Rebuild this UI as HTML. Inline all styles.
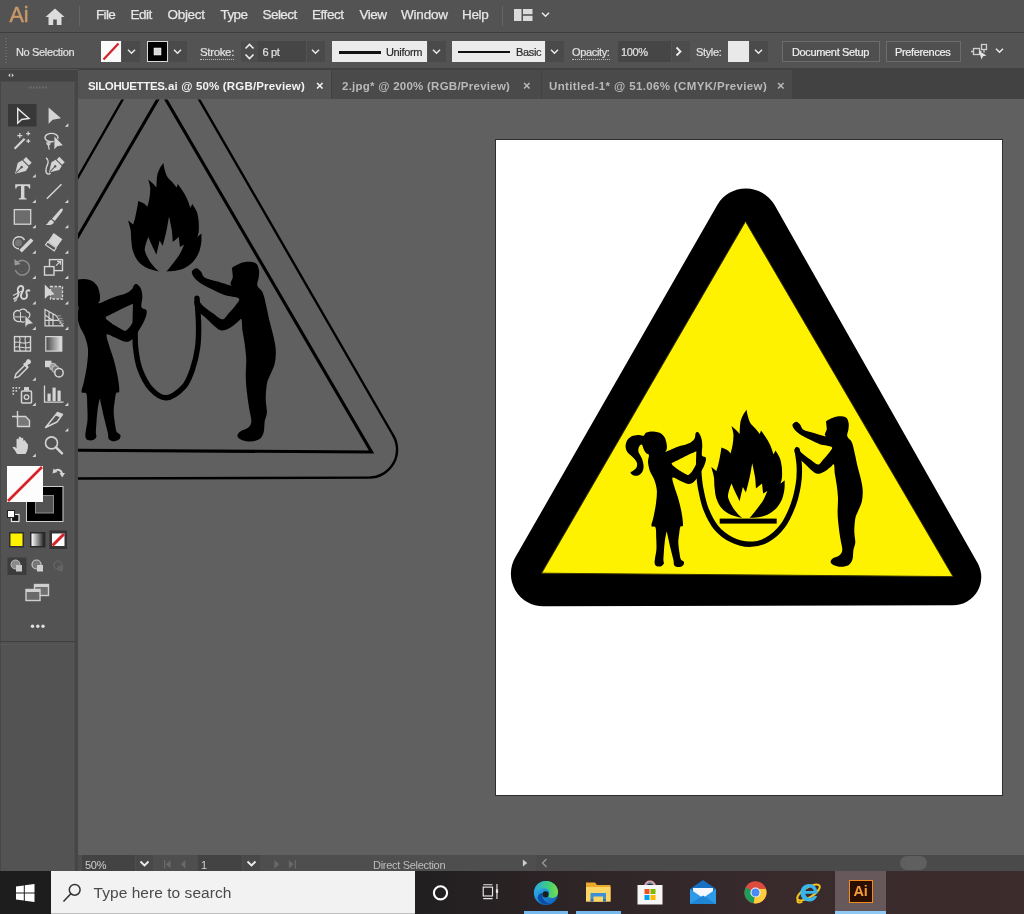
<!DOCTYPE html>
<html><head><meta charset="utf-8"><title>Illustrator</title>
<style>
*{box-sizing:border-box;margin:0;padding:0}
html,body{width:1024px;height:914px;overflow:hidden;background:#606060;font-family:"Liberation Sans",sans-serif;color:#e6e6e6;font-size:13px}
body{position:relative}
.a{position:absolute}
.t{position:absolute;white-space:nowrap;line-height:1}
#menubar{position:absolute;left:0;top:0;width:1024px;height:32px;background:#535353}
#menubar .t{top:8.1px;font-size:13.5px;color:#e6e6e6;letter-spacing:-0.2px;-webkit-text-stroke:0.25px #e6e6e6}
#ctrl{position:absolute;left:0;top:32px;width:1024px;height:38px;background:#535353;border-top:1px solid #3e3e3e;border-bottom:2px solid #414141}
#ctrl .t{font-size:11px;color:#e2e2e2;letter-spacing:-0.35px;top:14px;-webkit-text-stroke:0.2px currentColor}
.dd{position:absolute;top:8px;height:21px;width:18px;background:#4a4a4a}
.inp{position:absolute;top:8px;height:21px;background:#464646}
#tabs{position:absolute;left:0;top:70px;width:1024px;height:29.4px;background:#424242}
.tab{position:absolute;top:0;height:29.4px;background:#4a4a4a;color:#b9b9b9}
.tab .t{font-size:11.5px;font-weight:bold;top:10.6px;letter-spacing:-0.1px}
#tools{position:absolute;left:0;top:69px;width:78px;height:802px;background:#535353}
#status{position:absolute;left:78px;top:855px;width:946px;height:16px;background:#4e4e4e}
#status .t{font-size:11px;color:#d0d0d0;letter-spacing:-0.3px;top:5px}
#taskbar{position:absolute;left:0;top:871px;width:1024px;height:43px;background:linear-gradient(90deg,#1d1d1d 0,#1f1e1e 400px,#2d2426 560px,#382a2c 760px,#3d2c2c 1024px)}
#menubar,#ctrl,#tabs,#status,#taskbar{will-change:transform}
</style></head>
<body>

<svg id="art" width="1024" height="914" viewBox="0 0 1024 914" style="position:absolute;left:0;top:0">
<defs>
<clipPath id="cv"><rect x="78" y="99.4" width="946" height="756"/></clipPath>
<path id="girl" d="M653.3 431.4C655.6 431.5 658.4 432.1 660.3 433.1C662.2 434.2 663.6 435.9 664.7 437.5C665.7 439.1 666.0 441.2 666.4 442.8C666.8 444.3 666.9 445.5 666.9 446.6C667.0 447.8 666.7 448.9 666.6 449.8C666.4 450.6 664.2 452.2 666.1 451.7C667.9 451.2 674.1 448.1 677.8 446.8C681.5 445.5 685.5 445.0 688.3 443.6C691.1 442.3 693.2 440.7 694.4 438.9C695.7 437.2 695.0 434.2 695.7 433.1C696.3 432.1 697.5 431.7 698.5 432.6C699.4 433.5 700.8 436.1 701.4 438.4C702.1 440.7 702.3 443.8 702.3 446.3C702.3 448.8 701.4 451.7 701.4 453.3C701.4 454.9 701.6 455.2 702.3 455.9C703.0 456.6 705.4 456.3 705.8 457.7C706.3 459.0 705.8 461.3 704.9 463.8C704.1 466.3 702.3 469.6 700.6 472.5C698.8 475.5 696.5 479.4 694.4 481.3C692.4 483.2 690.8 484.1 688.3 483.9C685.8 483.8 682.2 481.4 679.5 480.4C676.9 479.4 673.4 476.8 672.5 477.8C671.7 478.8 673.4 483.3 674.3 486.5C675.2 489.8 676.6 493.0 677.8 497.1C679.0 501.1 680.4 506.4 681.3 511.1C682.2 515.7 683.2 522.5 683.0 525.1C682.9 527.7 681.1 525.4 680.4 526.8C679.8 528.3 679.5 531.2 679.2 533.8C678.8 536.5 678.3 539.4 678.3 542.6C678.4 545.8 679.1 550.3 679.5 553.1C680.0 555.9 680.0 557.8 680.8 559.2C681.5 560.7 683.5 560.8 683.9 561.9C684.3 562.9 683.9 564.5 683.0 565.4C682.2 566.2 680.1 567.1 678.7 567.1C677.2 567.1 675.2 566.5 674.3 565.4C673.4 564.2 674.0 562.7 673.4 560.1C672.8 557.5 671.8 553.7 670.8 549.6C669.8 545.5 668.3 538.5 667.6 535.6C666.9 532.7 667.1 530.9 666.6 532.1C666.1 533.3 665.1 539.1 664.7 542.6C664.2 546.1 664.0 550.2 663.8 553.1C663.6 556.0 663.4 558.4 663.4 560.1C663.4 561.9 664.2 562.6 663.8 563.6C663.4 564.6 662.3 565.8 661.2 566.2C660.0 566.7 657.9 566.7 656.8 566.2C655.7 565.8 655.0 564.9 654.7 563.6C654.4 562.3 654.7 560.7 655.0 558.4C655.3 556.0 656.2 552.8 656.4 549.6C656.6 546.4 656.4 542.7 656.3 539.1C656.1 535.4 656.3 529.9 655.6 527.7C654.8 525.5 651.9 527.6 651.5 526.0C651.1 524.3 652.5 521.7 653.3 518.1C654.0 514.4 655.3 508.7 655.9 504.1C656.5 499.4 657.1 494.1 656.8 490.1C656.5 486.0 655.3 482.8 654.2 479.5C653.0 476.3 650.8 473.7 649.8 470.8C648.8 467.9 648.2 464.7 648.0 462.0C647.9 459.4 649.2 456.5 648.9 455.0C648.6 453.6 647.1 454.3 646.3 453.3C645.4 452.3 644.4 450.4 643.6 448.9C642.9 447.4 642.6 445.0 641.9 444.5C641.2 444.1 639.8 445.1 639.3 446.3C638.7 447.4 638.0 449.5 638.4 451.5C638.8 453.6 641.0 456.0 641.9 458.5C642.8 461.0 643.6 464.1 643.6 466.4C643.6 468.7 642.9 471.0 641.9 472.5C640.9 474.1 639.0 475.3 637.5 475.7C636.1 476.1 634.3 475.7 633.1 475.2C632.0 474.6 630.5 473.3 630.5 472.5C630.5 471.8 632.1 471.7 633.1 470.8C634.2 469.9 636.1 468.7 636.6 467.3C637.2 465.8 637.4 463.8 636.6 462.0C635.9 460.3 633.9 458.5 632.3 456.8C630.7 455.0 628.1 453.4 627.0 451.5C625.9 449.6 625.5 447.4 625.6 445.4C625.8 443.4 626.6 440.9 627.9 439.3C629.1 437.7 631.2 436.5 633.1 435.8C635.0 435.0 637.5 434.9 639.3 434.9C641.0 434.9 642.5 436.1 643.6 435.8C644.8 435.4 644.7 433.3 646.3 432.6C647.9 431.9 650.9 431.3 653.3 431.4Z"/>
<path id="girlL" d="M653.3 431.4C655.6 431.5 658.4 432.1 660.3 433.1C662.2 434.2 663.6 435.9 664.7 437.5C665.7 439.1 666.0 441.2 666.4 442.8C666.8 444.3 666.9 445.5 666.9 446.6C667.0 447.8 666.7 448.9 666.6 449.8C666.4 450.6 664.2 452.2 666.1 451.7C667.9 451.2 674.1 448.1 677.8 446.8C681.5 445.5 685.7 444.8 688.3 443.6C690.9 442.5 692.4 441.1 693.6 440.0C694.7 438.8 694.6 437.3 695.3 436.6C696.0 435.9 697.0 435.3 697.9 435.8C698.9 436.3 700.4 437.9 701.1 439.6C701.8 441.4 702.3 444.0 702.3 446.3C702.4 448.5 701.4 451.7 701.4 453.3C701.4 454.9 701.6 455.2 702.3 455.9C703.0 456.6 705.4 456.3 705.8 457.7C706.3 459.0 705.8 461.3 704.9 463.8C704.1 466.3 702.3 469.6 700.6 472.5C698.8 475.5 696.5 479.4 694.4 481.3C692.4 483.2 690.8 484.1 688.3 483.9C685.8 483.8 682.2 481.4 679.5 480.4C676.9 479.4 673.4 476.8 672.5 477.8C671.7 478.8 673.4 483.3 674.3 486.5C675.2 489.8 676.6 493.0 677.8 497.1C679.0 501.1 680.4 506.4 681.3 511.1C682.2 515.7 683.2 522.5 683.0 525.1C682.9 527.7 681.1 525.4 680.4 526.8C679.8 528.3 679.5 531.2 679.2 533.8C678.8 536.5 678.3 539.4 678.3 542.6C678.4 545.8 679.1 550.3 679.5 553.1C680.0 555.9 680.0 557.8 680.8 559.2C681.5 560.7 683.5 560.8 683.9 561.9C684.3 562.9 683.9 564.5 683.0 565.4C682.2 566.2 680.1 567.1 678.7 567.1C677.2 567.1 675.2 566.5 674.3 565.4C673.4 564.2 674.0 562.7 673.4 560.1C672.8 557.5 671.8 553.7 670.8 549.6C669.8 545.5 668.3 538.5 667.6 535.6C666.9 532.7 667.1 530.9 666.6 532.1C666.1 533.3 665.1 539.1 664.7 542.6C664.2 546.1 664.0 550.2 663.8 553.1C663.6 556.0 663.4 558.4 663.4 560.1C663.4 561.9 664.2 562.6 663.8 563.6C663.4 564.6 662.3 565.8 661.2 566.2C660.0 566.7 657.9 566.7 656.8 566.2C655.7 565.8 655.0 564.9 654.7 563.6C654.4 562.3 654.7 560.7 655.0 558.4C655.3 556.0 656.2 552.8 656.4 549.6C656.6 546.4 656.4 542.7 656.3 539.1C656.1 535.4 656.3 529.9 655.6 527.7C654.8 525.5 651.9 527.6 651.5 526.0C651.1 524.3 652.5 521.7 653.3 518.1C654.0 514.4 655.3 508.7 655.9 504.1C656.5 499.4 657.1 494.1 656.8 490.1C656.5 486.0 655.3 482.8 654.2 479.5C653.0 476.3 650.8 473.7 649.8 470.8C648.8 467.9 648.2 464.7 648.0 462.0C647.9 459.4 649.2 456.5 648.9 455.0C648.6 453.6 647.1 454.3 646.3 453.3C645.4 452.3 644.4 450.4 643.6 448.9C642.9 447.4 642.6 445.0 641.9 444.5C641.2 444.1 639.8 445.1 639.3 446.3C638.7 447.4 638.0 449.5 638.4 451.5C638.8 453.6 641.0 456.0 641.9 458.5C642.8 461.0 643.6 464.1 643.6 466.4C643.6 468.7 642.9 471.0 641.9 472.5C640.9 474.1 639.0 475.3 637.5 475.7C636.1 476.1 634.3 475.7 633.1 475.2C632.0 474.6 630.5 473.3 630.5 472.5C630.5 471.8 632.1 471.7 633.1 470.8C634.2 469.9 636.1 468.7 636.6 467.3C637.2 465.8 637.4 463.8 636.6 462.0C635.9 460.3 633.9 458.5 632.3 456.8C630.7 455.0 628.1 453.4 627.0 451.5C625.9 449.6 625.5 447.4 625.6 445.4C625.8 443.4 626.6 440.9 627.9 439.3C629.1 437.7 631.2 436.5 633.1 435.8C635.0 435.0 637.5 434.9 639.3 434.9C641.0 434.9 642.5 436.1 643.6 435.8C644.8 435.4 644.7 433.3 646.3 432.6C647.9 431.9 650.9 431.3 653.3 431.4Z"/>
<path id="boy" d="M836.1 416.7C839.3 416.1 843.5 416.2 845.6 417.3C847.7 418.3 848.1 421.0 848.6 423.0C849.1 425.1 848.6 427.3 848.4 429.5C848.2 431.7 846.7 434.2 847.3 436.2C847.8 438.3 850.6 439.4 851.7 442.0C852.9 444.5 853.5 447.7 854.3 451.5C855.2 455.2 856.1 459.8 857.1 464.5C858.2 469.1 859.9 475.0 860.9 479.3C861.8 483.7 862.6 486.8 862.7 490.5C862.9 494.2 862.6 498.2 861.8 501.7C861.0 505.1 859.2 508.2 858.1 510.9C857.0 513.7 855.9 515.0 855.3 518.4C854.7 521.8 854.3 527.4 854.3 531.4C854.3 535.4 855.4 539.4 855.3 542.5C855.1 545.6 853.9 547.2 853.4 550.0C853.0 552.8 853.3 556.8 852.5 559.3C851.7 561.8 850.6 563.6 848.8 564.9C846.9 566.1 843.8 566.6 841.3 566.7C838.9 566.8 835.7 566.0 833.9 565.2C832.1 564.4 830.7 563.2 830.6 562.1C830.4 560.9 831.5 559.5 833.0 558.3C834.5 557.2 837.9 556.6 839.5 555.2C841.0 553.8 842.1 552.7 842.3 550.0C842.4 547.3 841.0 542.9 840.4 538.8C839.8 534.8 839.0 530.2 838.6 525.8C838.1 521.5 837.7 517.5 837.6 512.8C837.5 508.2 838.1 502.6 838.0 497.9C837.8 493.3 837.2 489.0 836.7 484.9C836.2 480.9 835.3 477.2 834.8 473.8C834.4 470.4 834.6 465.6 833.9 464.5C833.2 463.3 832.2 465.7 830.6 466.9C828.9 468.1 826.3 470.6 824.1 471.7C821.8 472.9 819.3 474.1 817.2 473.8C815.0 473.5 813.5 471.9 811.2 470.1C808.9 468.2 805.8 464.8 803.4 462.6C801.1 460.5 798.6 459.0 797.1 457.0C795.6 455.1 794.6 452.6 794.5 450.9C794.4 449.2 795.9 446.9 796.7 446.8C797.6 446.8 798.4 449.3 799.5 450.5C800.6 451.8 801.4 452.7 803.2 454.3C805.1 455.8 808.2 458.1 810.7 459.8C813.1 461.5 815.9 464.6 818.1 464.5C820.3 464.3 821.8 460.9 823.7 458.9C825.5 456.9 827.9 454.4 829.3 452.4C830.6 450.4 833.3 448.4 831.7 447.0C830.1 445.6 823.4 445.5 819.8 444.2C816.1 443.0 813.2 441.3 809.7 439.6C806.3 437.8 801.8 435.6 799.1 433.8C796.5 432.0 794.8 430.2 793.8 428.6C792.7 427.0 792.2 425.5 792.6 424.3C793.1 423.2 795.1 421.7 796.4 421.7C797.6 421.8 798.9 423.2 800.1 424.5C801.3 425.8 801.1 428.3 803.4 429.7C805.7 431.1 810.4 431.8 814.0 432.9C817.6 434.0 823.4 436.0 825.2 436.2C827.0 436.4 824.5 435.3 824.8 434.2C825.0 433.1 826.4 431.3 826.7 429.5C826.9 427.8 826.3 425.2 826.3 423.8C826.3 422.3 825.2 422.0 826.8 420.8C828.5 419.6 833.0 417.3 836.1 416.7Z"/>
<path id="flame" d="M746.6 409.7C746.8 410.8 747.2 413.8 747.8 416.0C748.5 418.2 749.1 420.9 750.3 423.0C751.6 425.0 753.8 426.8 755.4 428.6C756.9 430.5 759.0 433.1 759.8 434.0C760.0 433.4 760.8 431.1 761.0 430.5C761.8 431.5 764.0 434.5 765.4 436.8C766.9 439.1 768.5 441.4 769.8 444.3C771.2 447.3 773.0 452.7 773.6 454.4C773.9 453.8 775.2 451.3 775.5 450.6C776.2 451.9 778.8 455.4 779.9 458.2C780.9 460.9 781.4 463.8 781.8 467.0C782.1 470.1 782.2 474.3 782.0 477.0C781.8 479.8 780.8 482.5 780.5 483.6C781.2 483.0 784.0 480.8 784.7 480.2C784.6 481.8 784.9 486.4 784.4 489.6C783.9 492.9 783.2 496.5 781.8 499.7C780.4 502.8 778.5 506.0 776.1 508.5C773.7 511.0 770.3 513.3 767.3 514.8C764.4 516.2 761.4 516.7 758.5 517.3C755.6 517.8 751.2 517.9 749.7 518.0C751.0 516.5 755.0 511.5 757.3 508.5C759.6 505.4 761.9 502.6 763.5 499.7C765.2 496.8 766.7 492.6 767.3 491.1C766.6 491.5 763.9 493.2 763.2 493.6C763.0 492.0 762.2 485.3 762.0 483.6C761.0 484.4 757.0 487.8 756.0 488.6C755.8 486.7 755.6 481.3 755.0 477.0C754.4 472.8 752.7 465.5 752.2 463.2C751.8 465.5 750.8 472.2 749.7 477.0C748.7 481.9 746.6 489.8 745.9 492.4C745.4 491.5 743.3 488.0 742.8 487.1C742.3 489.5 740.2 498.8 739.6 501.2C738.9 499.7 736.6 495.1 735.2 492.1C733.9 489.2 732.1 485.0 731.5 483.6C730.9 485.2 728.8 490.8 728.3 493.4C727.8 496.0 727.7 496.5 728.6 499.1C729.4 501.6 731.5 505.7 733.4 508.5C735.2 511.3 738.1 514.2 739.6 515.8C741.2 517.4 742.0 517.7 742.4 518.0C740.5 517.5 734.2 516.4 730.8 514.8C727.4 513.2 724.4 511.2 722.0 508.5C719.6 505.8 717.6 502.0 716.4 498.4C715.1 494.9 714.9 490.7 714.5 487.1C714.1 483.5 714.4 480.4 713.9 477.0C713.3 473.7 711.8 468.7 711.3 467.0C712.2 467.6 715.5 470.3 716.4 471.0C716.7 469.9 717.6 467.0 718.3 464.5C718.9 461.9 719.6 458.5 720.1 455.7C720.7 452.8 721.2 448.8 721.4 447.5C722.4 447.9 725.5 449.0 727.1 450.0C728.6 451.0 730.0 452.8 730.6 453.4C730.9 451.9 732.3 447.5 732.7 444.3C733.2 441.1 733.6 437.3 733.4 434.3C733.1 431.2 731.8 427.5 731.5 426.1C732.3 426.8 735.1 429.2 736.5 430.5C737.9 431.8 739.1 433.4 739.6 434.0C739.8 432.2 739.8 426.1 740.3 423.0C740.8 419.8 741.7 417.6 742.8 415.4C743.8 413.2 745.9 410.7 746.6 409.7Z"/>
</defs>
<g clip-path="url(#cv)">
<!-- left doc artwork -->
<path d="M368.7 477.6 L-95 479 L160.75 33 L392.95 435 A28 28 0 0 1 368.7 477.6Z" fill="none" stroke="#000" stroke-width="2.4"/>
<path d="M161.8 92.5 L371.5 452 L-46 449.6Z" fill="none" stroke="#000" stroke-width="3.1" stroke-linejoin="miter"/>
<use href="#flame" transform="translate(-583.2 -246.6)" fill="#000"/>
<g transform="translate(192 262) scale(1.195) translate(-792.6 -416.5)"><use href="#boy" fill="#000"/></g>
<g transform="translate(136 279) scale(1.195) translate(-697 -431.4)"><use href="#girlL" fill="#000"/><path d="M671.8 463.1C672.4 462.6 678.0 460.0 679.5 459.2C681.1 458.5 688.6 454.6 690.1 454.0C691.5 453.3 696.5 450.9 697.1 451.2C697.7 451.5 697.3 456.6 697.2 457.7C697.2 458.7 696.7 462.7 696.4 463.8C696.0 464.8 693.4 469.5 692.7 470.4C692.0 471.4 689.1 475.0 688.0 475.0C686.8 474.9 680.0 470.7 678.7 469.9C677.4 469.1 673.1 465.8 672.5 465.2C672.0 464.6 671.3 463.6 671.8 463.1Z" fill="#606060"/></g>
<path d="M135.8 300.0C135.7 304.3 135.2 317.7 135.2 325.6C135.2 333.5 134.8 340.2 135.6 347.5C136.4 354.8 137.4 362.5 140.0 369.4C142.6 376.3 146.6 384.3 151.0 389.0C155.4 393.7 160.8 398.2 166.3 397.8C171.8 397.4 179.4 391.6 183.8 386.9C188.2 382.2 190.2 376.0 192.5 369.4C194.8 362.8 196.6 354.8 197.6 347.5C198.6 340.2 198.7 333.8 198.6 325.6C198.5 317.4 197.3 302.9 197.0 298.3" fill="none" stroke="#000" stroke-width="5.4" stroke-linecap="round"/>
<!-- right artboard -->
<rect x="495" y="139" width="508" height="657" fill="#2e2e2e"/>
<rect x="496" y="140" width="506" height="655" fill="#fff"/>
<path d="M717.3 204.9A33.0 33.0 0 0 1 774.6 205.1L977.6 563.1A28.2 28.2 0 0 1 953.1 605.2L543.5 606.3A32.5 32.5 0 0 1 515.2 557.6Z" fill="#000"/>
<path d="M745.5 221.5 L953 576.6 L541.6 573.2Z" fill="#fff200" stroke="#3a3500" stroke-width="1"/>
<use href="#girl" fill="#000"/><path d="M671.8 463.1C672.4 462.6 678.0 460.0 679.5 459.2C681.1 458.5 688.6 454.6 690.1 454.0C691.5 453.3 696.5 450.9 697.1 451.2C697.7 451.5 697.3 456.6 697.2 457.7C697.2 458.7 696.7 462.7 696.4 463.8C696.0 464.8 693.4 469.5 692.7 470.4C692.0 471.4 689.1 475.0 688.0 475.0C686.8 474.9 680.0 470.7 678.7 469.9C677.4 469.1 673.1 465.8 672.5 465.2C672.0 464.6 671.3 463.6 671.8 463.1Z" fill="#fff200"/>
<use href="#boy" fill="#000"/>
<use href="#flame" fill="#000"/>
<rect x="719.7" y="518.6" width="57" height="5" fill="#000"/>
<path d="M699.1 449.9C699.0 453.2 698.5 463.7 698.7 470.0C699.0 476.2 699.3 481.0 700.5 487.5C701.7 493.9 703.1 501.7 705.7 508.4C708.4 515.2 711.9 522.4 716.2 527.7C720.6 532.9 726.4 537.2 732.0 539.9C737.5 542.7 743.6 544.3 749.5 544.3C755.3 544.3 761.4 543.0 767.0 539.9C772.5 536.9 778.3 531.8 782.7 525.9C787.1 520.1 790.6 511.9 793.2 505.0C795.8 498.0 797.4 490.4 798.4 484.0C799.5 477.5 799.5 472.2 799.3 466.5C799.1 460.8 797.6 452.6 797.2 449.9" fill="none" stroke="#000" stroke-width="5.4" stroke-linecap="round"/>
</g>
</svg>
<div id="menubar">
 <span class="t" style="left:9.5px;top:4.5px;font-size:21.5px;color:#c9986a;letter-spacing:-0.2px;-webkit-text-stroke:0.5px #c9986a">Ai</span>
 <svg class="a" style="left:45px;top:8px" width="20" height="18" viewBox="0 0 20 18"><path d="M10 0.5 L19.5 9 H16.5 V17 H11.8 V11.5 H8.2 V17 H3.5 V9 H0.5Z" fill="#dcdcdc"/></svg>
 <div class="a" style="left:79px;top:6px;width:1px;height:20px;background:#646464"></div>
 <span class="t" style="left:96px;letter-spacing:-0.65px">File</span>
 <span class="t" style="left:130.5px;letter-spacing:-0.5px">Edit</span>
 <span class="t" style="left:167.5px;letter-spacing:-0.3px">Object</span>
 <span class="t" style="left:220.5px;letter-spacing:-0.6px">Type</span>
 <span class="t" style="left:262.5px;letter-spacing:-0.55px">Select</span>
 <span class="t" style="left:312px;letter-spacing:-0.45px">Effect</span>
 <span class="t" style="left:359.5px;letter-spacing:-0.5px">View</span>
 <span class="t" style="left:401px;letter-spacing:-0.2px">Window</span>
 <span class="t" style="left:462px;letter-spacing:-0.35px">Help</span>
 <div class="a" style="left:502px;top:6px;width:1px;height:20px;background:#666"></div>
 <svg class="a" style="left:514px;top:9px" width="19" height="12" viewBox="0 0 19 12"><rect x="0" y="0" width="7.5" height="12" fill="#dadada"/><rect x="9" y="0" width="9.5" height="5.2" fill="#dadada"/><rect x="9" y="6.8" width="9.5" height="5.2" fill="#dadada"/></svg>
 <svg class="a" style="left:540px;top:11px" width="11" height="8" viewBox="0 0 11 8"><path d="M2 1.8 L5.5 5.2 L9 1.8" fill="none" stroke="#e8e8e8" stroke-width="1.6"/></svg>
</div>
<div id="ctrl">
 <div class="a" style="left:5px;top:5px;width:2px;height:27px;background:repeating-linear-gradient(#6a6a6a 0 1px,#535353 1px 3px)"></div>
 <span class="t" style="left:16px">No Selection</span>
 <!-- fill swatch -->
 <svg class="a" style="left:101px;top:8px" width="20" height="21" viewBox="0 0 20 21"><rect width="20" height="21" fill="#fafafa"/><path d="M2.5 18.5 L17.5 2.5" stroke="#d0242a" stroke-width="2.2"/></svg>
 <div class="dd" style="left:122px"></div>
 <svg class="a chev" style="left:126px;top:15px" width="11" height="8" viewBox="0 0 11 8"><path d="M2 1.8 L5.5 5.2 L9 1.8" fill="none" stroke="#e8e8e8" stroke-width="1.6"/></svg>
 <!-- stroke swatch -->
 <svg class="a" style="left:147px;top:8px" width="21" height="21" viewBox="0 0 21 21"><rect x=".5" y=".5" width="20" height="20" fill="#000" stroke="#d8d8d8"/><rect x="7.2" y="7.2" width="6.6" height="6.6" fill="#d8d8d8" stroke="#fff" stroke-width=".9"/></svg>
 <div class="dd" style="left:169px"></div>
 <svg class="a chev" style="left:172px;top:15px" width="11" height="8" viewBox="0 0 11 8"><path d="M2 1.8 L5.5 5.2 L9 1.8" fill="none" stroke="#e8e8e8" stroke-width="1.6"/></svg>
 <span class="t" style="left:200px;border-bottom:1px dotted #bbb;padding-bottom:0.5px;font-size:11.5px">Stroke:</span>
 <div class="inp" style="left:241px;width:17px;background:#4c4c4c"></div>
 <svg class="a" style="left:244px;top:9px" width="11" height="19" viewBox="0 0 11 19"><path d="M1.5 6.5 L5.5 2.5 L9.5 6.5 M1.5 12.5 L5.5 16.5 L9.5 12.5" fill="none" stroke="#eee" stroke-width="1.6"/></svg>
 <div class="inp" style="left:258px;width:48px"></div>
 <span class="t" style="left:262.5px">6 pt</span>
 <div class="dd" style="left:307px"></div>
 <svg class="a chev" style="left:310px;top:15px" width="11" height="8" viewBox="0 0 11 8"><path d="M2 1.8 L5.5 5.2 L9 1.8" fill="none" stroke="#e8e8e8" stroke-width="1.6"/></svg>
 <!-- Uniform -->
 <div class="a" style="left:332px;top:8px;width:95px;height:21px;background:#ebebeb"></div>
 <div class="a" style="left:339px;top:17.5px;width:42px;height:3px;background:#111"></div>
 <span class="t" style="left:386px;color:#2a2a2a">Uniform</span>
 <div class="dd" style="left:428px"></div>
 <svg class="a chev" style="left:431px;top:15px" width="11" height="8" viewBox="0 0 11 8"><path d="M2 1.8 L5.5 5.2 L9 1.8" fill="none" stroke="#e8e8e8" stroke-width="1.6"/></svg>
 <!-- Basic -->
 <div class="a" style="left:452px;top:8px;width:93px;height:21px;background:#ebebeb"></div>
 <div class="a" style="left:458px;top:18px;width:52px;height:2px;background:#111"></div>
 <span class="t" style="left:516px;color:#2a2a2a">Basic</span>
 <div class="dd" style="left:546px"></div>
 <svg class="a chev" style="left:549px;top:15px" width="11" height="8" viewBox="0 0 11 8"><path d="M2 1.8 L5.5 5.2 L9 1.8" fill="none" stroke="#e8e8e8" stroke-width="1.6"/></svg>
 <span class="t" style="left:572px;border-bottom:1px dotted #bbb;padding-bottom:0.5px">Opacity:</span>
 <div class="inp" style="left:618px;width:53px"></div>
 <span class="t" style="left:621px">100%</span>
 <div class="dd" style="left:672px;background:#4c4c4c"></div>
 <svg class="a" style="left:675px;top:13px" width="8" height="11" viewBox="0 0 8 11"><path d="M1.5 1.5 L5.5 5.5 L1.5 9.5" fill="none" stroke="#eee" stroke-width="1.8"/></svg>
 <span class="t" style="left:696px">Style:</span>
 <div class="a" style="left:728px;top:8px;width:21px;height:21px;background:#e9e9e9"></div>
 <div class="dd" style="left:750px"></div>
 <svg class="a chev" style="left:753px;top:15px" width="11" height="8" viewBox="0 0 11 8"><path d="M2 1.8 L5.5 5.2 L9 1.8" fill="none" stroke="#e8e8e8" stroke-width="1.6"/></svg>
 <div class="a" style="left:782px;top:8px;width:98px;height:21px;border:1px solid #6c6c6c;background:#4f4f4f"></div>
 <span class="t" style="left:792px;color:#f0f0f0">Document Setup</span>
 <div class="a" style="left:886px;top:8px;width:75px;height:21px;border:1px solid #6c6c6c;background:#4f4f4f"></div>
 <span class="t" style="left:895px;color:#f0f0f0">Preferences</span>
 <svg class="a" style="left:971px;top:10px" width="18" height="18" viewBox="0 0 18 18"><g fill="none" stroke="#cfcfcf" stroke-width="1.3"><rect x="2.5" y="5.5" width="6" height="6"/><rect x="10.5" y="1.5" width="5" height="5"/><path d="M0 8.5h2.5M8.5 8.5h2M13 6.5v3"/></g><path d="M8 8 L15.5 12.5 L12 13.2 L10.5 16.5Z" fill="#e4e4e4"/></svg>
 <svg class="a chev" style="left:994px;top:14px" width="11" height="8" viewBox="0 0 11 8"><path d="M2 1.8 L5.5 5.2 L9 1.8" fill="none" stroke="#e8e8e8" stroke-width="1.6"/></svg>
</div>
<div id="tabs">
 <div class="tab" style="left:78px;width:253px;background:#535353;color:#f2f2f2"><span class="t" style="left:10px;letter-spacing:0.17px"><span style="letter-spacing:-0.36px">SILOHUETTES</span>.ai @ 50% (RGB/Preview)</span><span class="t" style="left:238px;top:9px;font-size:13px">&#215;</span></div>
 <div class="tab" style="left:332px;width:209px"><span class="t" style="left:10px;letter-spacing:0.25px">2.jpg* @ 200% (RGB/Preview)</span><span class="t" style="left:191px;top:9px;font-size:13px">&#215;</span></div>
 <div class="tab" style="left:542px;width:250px"><span class="t" style="left:7px;letter-spacing:0.36px">Untitled-1* @ 51.06% (CMYK/Preview)</span><span class="t" style="left:235px;top:9px;font-size:13px">&#215;</span></div>
</div>
<div id="tools"></div>
<svg class="a" style="left:0;top:0" width="78" height="872" viewBox="0 0 78 872">
<rect x="0" y="70" width="78" height="11.5" fill="#434343"/>
<path d="M8.2 75.3 l2-2 v4z M13.8 75.3 l-2-2 v4z" fill="#cfcfcf"/>
<rect x="28" y="86.5" width="20" height="2" fill="url(#grip)"/>
<defs><pattern id="grip" width="3" height="2" patternUnits="userSpaceOnUse"><rect width="1.6" height="2" fill="#6e6e6e"/></pattern><linearGradient id="gr" x1="0" x2="1" y1="0" y2="0"><stop offset="0" stop-color="#fff"/><stop offset="1" stop-color="#222"/></linearGradient><linearGradient id="gr2" x1="0" x2="1" y1="0" y2="0"><stop offset="0" stop-color="#444"/><stop offset="1" stop-color="#e8e8e8"/></linearGradient></defs>
<rect x="0" y="82" width="1" height="790" fill="#474747"/>
<rect x="73.5" y="82" width="1" height="790" fill="#595959"/>
<rect x="74.5" y="81.5" width="3.5" height="790.5" fill="#464646"/>
<rect x="8" y="104" width="28.5" height="22.5" fill="#383838"/>
<path d="M17.7 108.60000000000001 V123.2 L21.6 119.5 L29 118.5Z" fill="none" stroke="#e6e6e6" stroke-width="1.4" stroke-linejoin="miter"/>
<path d="M48.6 107.60000000000001 V123.8 L52.6 119.8 L61 118.2Z" fill="#d4d4d4"/>
<path d="M68.3 123.2 v3.5 h-3.5z" fill="#d4d4d4"/>
<path d="M14.6 148.79999999999998 L24.6 138.79999999999998" stroke="#d4d4d4" stroke-width="2.2"/>
<g stroke="#d4d4d4" stroke-width="1.2"><path d="M19.8 133.1v5M17.3 135.6h5M28.2 131.6v4M26.2 133.6h4M28.3 139.1v4M26.3 141.1h4"/></g>
<ellipse cx="51.5" cy="137.6" rx="6.5" ry="4.2" fill="none" stroke="#d4d4d4" stroke-width="1.4"/>
<path d="M47.5 141.6 c-1.5 2 0 4 2 3 c1.5-1 0-3-1-2 c-1 1.5 .5 5 .8 7" fill="none" stroke="#d4d4d4" stroke-width="1.2"/>
<path d="M54 135.6 V150.1 L57.3 146.6 L63.5 145.6Z" fill="#d4d4d4" stroke="#535353" stroke-width=".8"/>
<g transform="translate(22.5 166.3) rotate(45) scale(1.0)"><path d="M-4 -9 h8 v4 h-8z" fill="#d4d4d4"/><path d="M-4.6 -4 h9.2 l1.2 5 l-5.8 9.5 l-5.8 -9.5z" fill="#d4d4d4"/><path d="M0 9 V2" stroke="#535353" stroke-width="1"/><circle cx="0" cy="1.2" r="1.3" fill="#535353"/></g>
<path d="M35.8 174.0 v3.5 h-3.5z" fill="#d4d4d4"/>
<g transform="translate(56 165.5) rotate(45) scale(0.95)"><path d="M-4 -9 h8 v4 h-8z" fill="#d4d4d4"/><path d="M-4.6 -4 h9.2 l1.2 5 l-5.8 9.5 l-5.8 -9.5z" fill="#d4d4d4"/><path d="M0 9 V2" stroke="#535353" stroke-width="1"/><circle cx="0" cy="1.2" r="1.3" fill="#535353"/></g>
<path d="M46 158.0 c2 1 2.5 4 1.5 6.5 c-1.2 3-2.5 6-1 8.5 c1 1.5 3 1.5 4 0" fill="none" stroke="#d4d4d4" stroke-width="1.4"/>
<path d="M15.2 184.2 h15 v4.4 h-1.2 c-.3-2-1-2.6-3-2.6 h-1.6 v10.8 c0 1.2 .6 1.6 2.2 1.7 v1.1 h-7.8 v-1.1 c1.600-.1 2.2-.5 2.200-1.7 v-10.8 h-1.600 c-2 0-2.700 .6-3 2.600 h-1.200z" fill="#d4d4d4"/>
<path d="M35.8 199.39999999999998 v3.5 h-3.5z" fill="#d4d4d4"/>
<path d="M46.8 198.79999999999998 L61.5 184.2" stroke="#d4d4d4" stroke-width="1.5"/>
<path d="M68.3 199.39999999999998 v3.5 h-3.5z" fill="#d4d4d4"/>
<rect x="14.3" y="209.60000000000002" width="16.4" height="14.6" fill="#6c6c6c" stroke="#d4d4d4" stroke-width="1.3"/>
<path d="M35.8 224.8 v3.5 h-3.5z" fill="#d4d4d4"/>
<path d="M62.3 208.60000000000002 c.8 .6 .6 1.6 0 2.600 l-7.500 9.800 l-2.800-2.300 l8.300-9.500 c.6-.7 1.400-1 2-.6z" fill="#d4d4d4"/><path d="M51.3 219.60000000000002 l2.700 2.300 c-.5 2.500-3.500 3.600-8.300 3 c2.500-1 2.600-3.800 5.600-5.300z" fill="#d4d4d4"/>
<path d="M68.3 224.8 v3.5 h-3.5z" fill="#d4d4d4"/>
<path d="M24.5 240.2 a6 6 0 1 0 -5.500 8.600" fill="none" stroke="#d4d4d4" stroke-width="1.5"/><circle cx="18.5" cy="242.79999999999998" r="3.600" fill="#777"/>
<path d="M20 250.5 l1.800 2 l11.600-11.700 l-2.600-2.600 l-11.600 11.700z" fill="#d4d4d4"/>
<path d="M35.8 250.2 v3.5 h-3.5z" fill="#d4d4d4"/>
<g transform="translate(54 241.89999999999998) rotate(35) scale(.88)"><rect x="-6" y="-8" width="12" height="11.500" fill="#d4d4d4"/><rect x="-6" y="4.200" width="12" height="4" fill="none" stroke="#d4d4d4" stroke-width="1.300"/></g>
<path d="M68.3 250.2 v3.5 h-3.5z" fill="#d4d4d4"/>
<path d="M17.5 262.09999999999997 a7.300 7.300 0 1 1 -2.200 8" fill="none" stroke="#8a8a8a" stroke-width="1.600"/><path d="M14.300 259.09999999999997 l.4 6.500 l6-1.700z" fill="#9a9a9a"/><circle cx="22.5" cy="268.09999999999997" r="3.500" fill="none" stroke="#666" stroke-width="1" stroke-dasharray="1.500 1.500"/>
<path d="M35.8 275.59999999999997 v3.5 h-3.5z" fill="#d4d4d4"/>
<rect x="49.5" y="259.59999999999997" width="13" height="11" fill="none" stroke="#d4d4d4" stroke-width="1.400"/><rect x="44.500" y="266.59999999999997" width="9.500" height="8.500" fill="#535353" stroke="#d4d4d4" stroke-width="1.400"/><path d="M56 265.59999999999997 l4.500-4.300 m-3.400 0 h3.400 v3.400" fill="none" stroke="#d4d4d4" stroke-width="1.200"/>
<path d="M68.3 275.59999999999997 v3.5 h-3.5z" fill="#d4d4d4"/>
<path d="M13.5 299.0 c4-1 6-4 4.500-7.500 c-1.200-3 1-6 3.500-5.500 c2.500 .5 2 4 .5 6.500 c-2 3.500-1 6.500 2 6.500 c3 0 3.500-3.500 2.500-6 c-.8-2.200 1.500-3.500 3.500-2 " fill="none" stroke="#d4d4d4" stroke-width="2"/><path d="M13 295.5 l10-5 M14 301.5 l3-2" stroke="#d4d4d4" stroke-width="1.200"/>
<path d="M35.8 301.0 v3.5 h-3.5z" fill="#d4d4d4"/>
<rect x="50.500" y="286.5" width="12" height="12.500" fill="#777" stroke="#d4d4d4" stroke-width="1.300" stroke-dasharray="2.500 1.500"/><path d="M44.800 284.5 V299.0 l3.300-3.300 l6.500-1.500z" fill="#d4d4d4"/>
<path d="M68.3 301.0 v3.5 h-3.5z" fill="#d4d4d4"/>
<path d="M14 316.4 c-1.500-3.500 2-7 5.500-5.500 c1.500-2.500 6.500-2.500 7.500 1 c3 0 4 4 1.500 6 c-1 4-5 5-8 3.500 c-3.500 1-7.500-1.500-6.500-5z" fill="none" stroke="#d4d4d4" stroke-width="1.300"/><path d="M15 316.9 h11 M20.500 311.9 v10" stroke="#d4d4d4" stroke-width="1"/><path d="M25 315.4 V327.4 l3-3 l5.500-.8z" fill="#d4d4d4" stroke="#535353" stroke-width=".7"/>
<path d="M35.8 326.4 v3.5 h-3.5z" fill="#d4d4d4"/>
<path d="M45 309.4 V325.9 L63 325.9 L56 315.4Z M45 314.9 L53 320.4 M45 320.4 L59 320.4 M49 311.4 V325.9 M53 313.4 V325.9" fill="none" stroke="#d4d4d4" stroke-width="1.200"/><path d="M56 315.9 h5 M57 318.4 h5.500 M58 320.9 h5.500 M59 323.4 h5" stroke="#9a9a9a" stroke-width="1"/>
<path d="M68.3 326.4 v3.5 h-3.5z" fill="#d4d4d4"/>
<rect x="14.500" y="336.6" width="16" height="14.500" fill="none" stroke="#d4d4d4" stroke-width="1.400"/><path d="M14.500 342.8 c4-3 8 3 16-1 M14.500 347.3 c5-2 9 2 16 0 M19.500 336.8 c2 4-2 9 1 14.500 M25.500 336.8 c-2 4 2 9 0 14.500" fill="none" stroke="#d4d4d4" stroke-width="1.100"/>
<rect x="45.800" y="336.6" width="16" height="14.500" fill="url(#gr2)" stroke="#d4d4d4" stroke-width="1.200"/>
<path d="M14.800 377.7 l1.200-3.800 l9-9 l2.700 2.700 l-9 9z" fill="none" stroke="#d4d4d4" stroke-width="1.400"/><path d="M23.800 363.4 l4 4 M25.500 364.7 l2.200-4.200 c1-1 3 1 2 2 l-4.200 2.200" stroke="#d4d4d4" stroke-width="2.200" fill="#d4d4d4"/>
<path d="M35.8 377.2 v3.5 h-3.5z" fill="#d4d4d4"/>
<rect x="45" y="360.7" width="6.500" height="6.500" fill="#d4d4d4"/><circle cx="53" cy="366.7" r="3.500" fill="#999" stroke="#d4d4d4" stroke-width=".8"/><circle cx="55.500" cy="369.2" r="3.500" fill="#777" stroke="#d4d4d4" stroke-width=".8"/><circle cx="59" cy="372.7" r="4.200" fill="#535353" stroke="#d4d4d4" stroke-width="1.500"/>
<rect x="21.500" y="391.09999999999997" width="10" height="12" rx="1" fill="none" stroke="#d4d4d4" stroke-width="1.500"/><rect x="24" y="387.09999999999997" width="5" height="3.500" fill="#d4d4d4"/><circle cx="26.500" cy="397.09999999999997" r="2.300" fill="none" stroke="#d4d4d4" stroke-width="1.300"/><g fill="#d4d4d4"><rect x="12.500" y="387.09999999999997" width="1.600" height="1.600"/><rect x="15.500" y="387.09999999999997" width="1.600" height="1.600"/><rect x="18.500" y="387.09999999999997" width="1.600" height="1.600"/><rect x="12.500" y="390.09999999999997" width="1.600" height="1.600"/><rect x="15.500" y="390.09999999999997" width="1.600" height="1.600"/><rect x="12.500" y="393.09999999999997" width="1.600" height="1.600"/></g>
<path d="M35.8 402.59999999999997 v3.5 h-3.5z" fill="#d4d4d4"/>
<path d="M44.500 385.59999999999997 V402.09999999999997 H63.500" fill="none" stroke="#d4d4d4" stroke-width="1.300"/><rect x="47.500" y="393.59999999999997" width="3.200" height="7.500" fill="#d4d4d4"/><rect x="52.500" y="387.59999999999997" width="3.200" height="13.500" fill="#d4d4d4"/><rect x="57.500" y="390.59999999999997" width="3.200" height="10.500" fill="#d4d4d4"/>
<path d="M68.3 402.59999999999997 v3.5 h-3.5z" fill="#d4d4d4"/>
<path d="M12 416.49999999999994 H19 M17.500 410.99999999999994 V418.99999999999994" stroke="#d4d4d4" stroke-width="1.400"/><path d="M17.500 416.49999999999994 H25.500 L29.500 420.49999999999994 V426.49999999999994 H17.500Z" fill="#777" stroke="#d4d4d4" stroke-width="1.400"/>
<path d="M45.500 427.49999999999994 L57.500 412.49999999999994 L62.500 414.49999999999994 L57 421.99999999999994Z" fill="none" stroke="#d4d4d4" stroke-width="1.400" stroke-linejoin="round"/><path d="M57.500 412.49999999999994 L62.500 414.49999999999994 L60.500 417.49999999999994 L55.500 415.49999999999994Z" fill="#d4d4d4"/>
<path d="M68.3 427.99999999999994 v3.5 h-3.5z" fill="#d4d4d4"/>
<path d="M17 453.9 c-1.500-3-3-5-4.500-6.500 c1-1.500 3-.5 4 1 V439.9 c0-1.500 2.200-1.500 2.200 0 V437.9 c0-1.500 2.300-1.500 2.300 0 V438.9 c0-1.500 2.300-1.500 2.300 0 V441.4 c0-1.500 2.200-1.500 2.200 0 l2.500 3 c0 5-1 7-2.500 9.500z" fill="#d4d4d4"/>
<path d="M35.8 453.4 v3.5 h-3.5z" fill="#d4d4d4"/>
<circle cx="51.500" cy="442.9" r="6" fill="none" stroke="#d4d4d4" stroke-width="1.600"/><path d="M56 447.4 l6 6" stroke="#d4d4d4" stroke-width="2.400" stroke-linecap="round"/>
<rect x="26.5" y="486.5" width="36.5" height="35" fill="#000" stroke="#cfcfcf" stroke-width="1"/>
<rect x="35.5" y="495.5" width="18" height="17.500" fill="#535353" stroke="#8e8e8e" stroke-width="1"/>
<rect x="7" y="466" width="36" height="36" fill="#fdfdfd"/><path d="M8 501 L42 467" stroke="#d7222a" stroke-width="2.600"/>
<path d="M54.500 471.500 c2.500-3 7-2 7.500 2.500" fill="none" stroke="#d4d4d4" stroke-width="2"/><path d="M52.500 473.500 l1-5 l4 3.500z M59.500 473 h5.500 l-2.800 4.500z" fill="#d4d4d4"/>
<rect x="11.500" y="514.500" width="7.500" height="7" fill="#111" stroke="#e8e8e8" stroke-width="1.200"/><rect x="7.500" y="510.500" width="7" height="7" fill="#fff" stroke="#222" stroke-width="1"/>
<rect x="9" y="532" width="15" height="15.500" fill="#2e2e2e"/><rect x="10.500" y="533.500" width="12" height="12.500" fill="#fff200"/>
<rect x="30" y="532" width="15.500" height="15.500" fill="#2a2a2a"/><rect x="31.500" y="533.500" width="12.500" height="12.500" fill="url(#gr)"/>
<rect x="49.500" y="530.500" width="17.500" height="18.500" fill="#333"/><rect x="52" y="533.500" width="12.500" height="12.500" fill="#fff"/><path d="M52.500 545.500 L64 534" stroke="#d7222a" stroke-width="3"/>
<rect x="7.500" y="557.500" width="19" height="17.500" fill="#3c3c3c"/>
<circle cx="15.500" cy="564.500" r="4.500" fill="#8a8a8a" stroke="#bdbdbd" stroke-width="1"/><rect x="16" y="565" width="6" height="6.500" fill="#c8c8c8"/>
<circle cx="36.500" cy="564.500" r="4.500" fill="#777" stroke="#c4c4c4" stroke-width="1.200"/><rect x="37" y="565" width="6" height="6.500" fill="#cfcfcf"/>
<circle cx="58" cy="565" r="4" fill="none" stroke="#686868" stroke-width="1.200"/><rect x="58" y="565.500" width="5" height="5.500" fill="#636363"/>
<rect x="34.500" y="584.500" width="14" height="11" fill="#707070" stroke="#cfcfcf" stroke-width="1.400"/><rect x="34.500" y="584.500" width="14" height="2.500" fill="#cfcfcf"/><rect x="26" y="589.500" width="14" height="11" fill="#6a6a6a" stroke="#cfcfcf" stroke-width="1.400"/><rect x="26" y="589.500" width="14" height="2.500" fill="#cfcfcf"/>
<circle cx="32.500" cy="626.300" r="1.700" fill="#e0e0e0"/><circle cx="37.800" cy="626.300" r="1.700" fill="#e0e0e0"/><circle cx="43" cy="626.300" r="1.700" fill="#e0e0e0"/>
<rect x="0" y="641" width="75" height="1.2" fill="#414141"/>
<rect x="0" y="644" width="74" height="1" fill="#585858"/>
</svg>
<div id="status">
 <div class="a" style="left:4px;top:0;width:53px;height:16px;background:#434343"></div>
 <span class="t" style="left:7px">50%</span>
 <div class="a" style="left:58px;top:0;width:17px;height:16px;background:#484848"></div>
 <svg class="a" style="left:61px;top:5px" width="11" height="8" viewBox="0 0 11 8"><path d="M1.500 1.500 L5.500 5.500 L9.500 1.500" fill="none" stroke="#eee" stroke-width="1.800"/></svg>
 <svg class="a" style="left:85px;top:5px" width="27" height="8.500" viewBox="0 0 30 10"><path d="M1 0v10" stroke="#696969" stroke-width="1.500"/><path d="M8 0 L2.500 5 L8 10Z M25.500 0 L20 5 L25.500 10Z" fill="#696969"/></svg>
 <div class="a" style="left:120px;top:0;width:44px;height:16px;background:#434343"></div>
 <span class="t" style="left:123px">1</span>
 <div class="a" style="left:165px;top:0;width:17px;height:16px;background:#484848"></div>
 <svg class="a" style="left:168px;top:5px" width="11" height="8" viewBox="0 0 11 8"><path d="M1.500 1.500 L5.500 5.500 L9.500 1.500" fill="none" stroke="#eee" stroke-width="1.800"/></svg>
 <svg class="a" style="left:194px;top:5px" width="27" height="8.500" viewBox="0 0 30 10"><path d="M2 0 L7.500 5 L2 10Z M19 0 L24.500 5 L19 10Z" fill="#696969"/><path d="M26.500 0v10" stroke="#696969" stroke-width="1.500"/></svg>
 <span class="t" style="left:295px;color:#bdbdbd">Direct Selection</span>
 <svg class="a" style="left:444px;top:2.500px" width="7" height="10" viewBox="0 0 8 11"><path d="M1 1.500 L6 5.500 L1 9.500Z" fill="#cfcfcf"/></svg>
 <div class="a" style="left:458px;top:0;width:488px;height:16px;background:#4a4a4a"></div>
 <svg class="a" style="left:463px;top:2.500px" width="7" height="10" viewBox="0 0 7 10"><path d="M5.500 1 L1.500 5 L5.500 9" fill="none" stroke="#9a9a9a" stroke-width="1.300"/></svg>
 <div class="a" style="left:822px;top:0.500px;width:27px;height:14.500px;border-radius:7.500px;background:#5f5f5f"></div>
</div>
<div id="taskbar">
 <!-- windows logo -->
 <svg class="a" style="left:16px;top:13px" width="19" height="18" viewBox="0 0 19 18"><path d="M0 2.600 L7.800 1.500 V8.500 H0Z M8.800 1.350 L18.500 0 V8.500 H8.800Z M0 9.500 H7.800 V16.500 L0 15.400Z M8.800 9.500 H18.500 V18 L8.800 16.650Z" fill="#fff"/></svg>
 <!-- search -->
 <div class="a" style="left:51px;top:0;width:364px;height:43px;background:#f2f2f2;border-bottom:1px solid #bdbdbd"></div>
 <svg class="a" style="left:61px;top:11px" width="22" height="22" viewBox="0 0 22 22"><circle cx="13.700" cy="7.800" r="5.400" fill="none" stroke="#333" stroke-width="1.500"/><path d="M9.800 11.800 L2.500 19.500" stroke="#333" stroke-width="1.600"/></svg>
 <span class="t" style="left:93.500px;top:14px;font-size:15.500px;color:#4a4a4a;letter-spacing:0.05px">Type here to search</span>
 <!-- cortana -->
 <svg class="a" style="left:430px;top:11px" width="21" height="21" viewBox="0 0 21 21"><circle cx="10.500" cy="10.800" r="6.600" fill="none" stroke="#fff" stroke-width="2.100"/></svg>
 <!-- task view -->
 <svg class="a" style="left:481px;top:13px" width="19.500" height="16" viewBox="0 0 22 18"><g fill="none" stroke="#e8e8e8" stroke-width="1.300"><rect x="2.500" y="3.500" width="10.500" height="10"/><path d="M2.500 0.800 H13 M2.500 16.500 H13 M18 0 V17"/></g><rect x="16.800" y="6" width="2.500" height="4" fill="#e8e8e8"/></svg>
 <!-- edge -->
 <div class="a" style="left:524px;top:40px;width:44px;height:3px;background:#76b9ed"></div>
 <svg class="a" style="left:533px;top:8.500px" width="26" height="26" viewBox="0 0 28 28"><defs><linearGradient id="eg1" x1="0" y1="0" x2="1" y2="1"><stop offset="0" stop-color="#35c1f1"/><stop offset="1" stop-color="#0b56b8"/></linearGradient><linearGradient id="eg2" x1="0" y1="0" x2="1" y2="0"><stop offset="0" stop-color="#2aa9e0"/><stop offset=".6" stop-color="#3ecf7a"/><stop offset="1" stop-color="#7fdc4b"/></linearGradient></defs><circle cx="14" cy="14" r="13" fill="url(#eg1)"/><path d="M1.500 11 C3 4 9 .8 14.500 1 C22 1.300 27 7 27 13 C27 17 24 19.500 20.500 19.500 C17.500 19.500 16 18 16.500 16.500 C17 15 18 14.500 17.500 12.500 C16.800 10 13.500 8.500 10.500 9 C6 9.800 2.500 13 1.500 11Z" fill="url(#eg2)"/><path d="M10 14 C9 19 12.500 24.500 19 25.500 C15 27.500 9 26.500 6 22 C4 19 5.500 14.500 10 14Z" fill="#0a4ea8"/><circle cx="13.500" cy="15.500" r="3.300" fill="#1b1d1f"/></svg>
 <!-- explorer -->
 <div class="a" style="left:576px;top:40px;width:45px;height:3px;background:#76b9ed"></div>
 <svg class="a" style="left:586px;top:10px" width="25" height="22" viewBox="0 0 25 22"><path d="M0 1.500 H9 L11 4 H24.500 V20.500 H0Z" fill="#e8a92c"/><rect x="0" y="6" width="24.500" height="14.500" fill="#fbd667"/><rect x="4.500" y="12" width="15.500" height="5.500" fill="#3d8fd8"/><rect x="7.500" y="15.500" width="9.500" height="5" fill="#fbd667"/><rect x="4.500" y="17.500" width="3" height="3" fill="#2d6fb8"/><rect x="17" y="17.500" width="3" height="3" fill="#2d6fb8"/></svg>
 <!-- store -->
 <svg class="a" style="left:636px;top:7px" width="28" height="28" viewBox="0 0 28 28"><path d="M9 8 C9 2 19 2 19 8" fill="none" stroke="#e2a3a3" stroke-width="1.800"/><path d="M10.500 8 C10.500 4 17.500 4 17.500 8" fill="none" stroke="#7ab6e6" stroke-width="1.200"/><rect x="1.500" y="7" width="25" height="19.500" fill="#f6f6f6"/><rect x="8.500" y="11" width="5" height="5" fill="#f25022"/><rect x="14.500" y="11" width="5" height="5" fill="#7fba00"/><rect x="8.500" y="17" width="5" height="5" fill="#00a4ef"/><rect x="14.500" y="17" width="5" height="5" fill="#ffb900"/></svg>
 <!-- mail -->
 <svg class="a" style="left:689px;top:8px" width="28" height="26" viewBox="0 0 28 26"><path d="M1 10 L14 1 L27 10 V25 H1Z" fill="#1670c4"/><path d="M4 9 H24 V18 H4Z" fill="#f4f8fc"/><path d="M1 10 L14 19 L27 10 V25 H1Z" fill="#2d9be8"/><path d="M1 25 L14 16.500 L27 25Z" fill="#1f86d6"/></svg>
 <!-- chrome -->
 <svg class="a" style="left:744px;top:10px" width="23" height="23" viewBox="0 0 25 25"><circle cx="12.500" cy="12.500" r="12" fill="#dd4b3e"/><path d="M12.500 12.500 L2.100 6.500 A12 12 0 0 0 10.500 24.300Z" fill="#1e9c59"/><path d="M12.500 12.500 L10.500 24.300 A12 12 0 0 0 23.800 8.500 L12.500 8.500Z" fill="#fccd3d"/><path d="M2.100 6.500 A12 12 0 0 1 23.800 8.500 L12.500 8.500 L7.500 10Z" fill="#dd4b3e"/><circle cx="12.500" cy="12.500" r="5.500" fill="#f2f2f2"/><circle cx="12.500" cy="12.500" r="4.300" fill="#4a8af4"/></svg>
 <!-- IE -->
 <svg class="a" style="left:795px;top:8.500px" width="27" height="25" viewBox="0 0 30 28"><ellipse cx="15" cy="14" rx="14.500" ry="5.500" transform="rotate(-32 15 14)" fill="none" stroke="#f5c51c" stroke-width="2.200"/><path d="M15.500 4.500 C21.500 4.500 25.500 9 25 15.500 H11.500 C11.800 18.500 14 20 16.500 20 C18.500 20 20 19.200 20.800 17.800 H24.600 C23.200 21.500 20 24 15.800 24 C10 24 6 19.800 6 14.300 C6 8.800 10 4.500 15.500 4.500Z M11.600 12.300 H20.800 C20.500 9.800 18.600 8.300 16.200 8.300 C13.800 8.300 12 9.800 11.600 12.300Z" fill="#39b5ea" fill-rule="evenodd"/><path d="M3.500 21.500 C1.500 24.500 3.500 26.500 8 24.500" fill="none" stroke="#f5c51c" stroke-width="2.200"/></svg>
 <!-- Ai -->
 <div class="a" style="left:835px;top:0;width:51px;height:43px;background:#67585b"></div>
 <div class="a" style="left:835px;top:40px;width:51px;height:3px;background:#8fc8f2"></div>
 <div class="a" style="left:848.500px;top:9px;width:24px;height:23px;background:#2b0e02;border:1.500px solid #f58a1f"></div>
 <span class="t" style="left:853.500px;top:13px;font-size:14.500px;font-weight:bold;color:#f59a3a;letter-spacing:-0.3px">Ai</span>
</div>
</body></html>
